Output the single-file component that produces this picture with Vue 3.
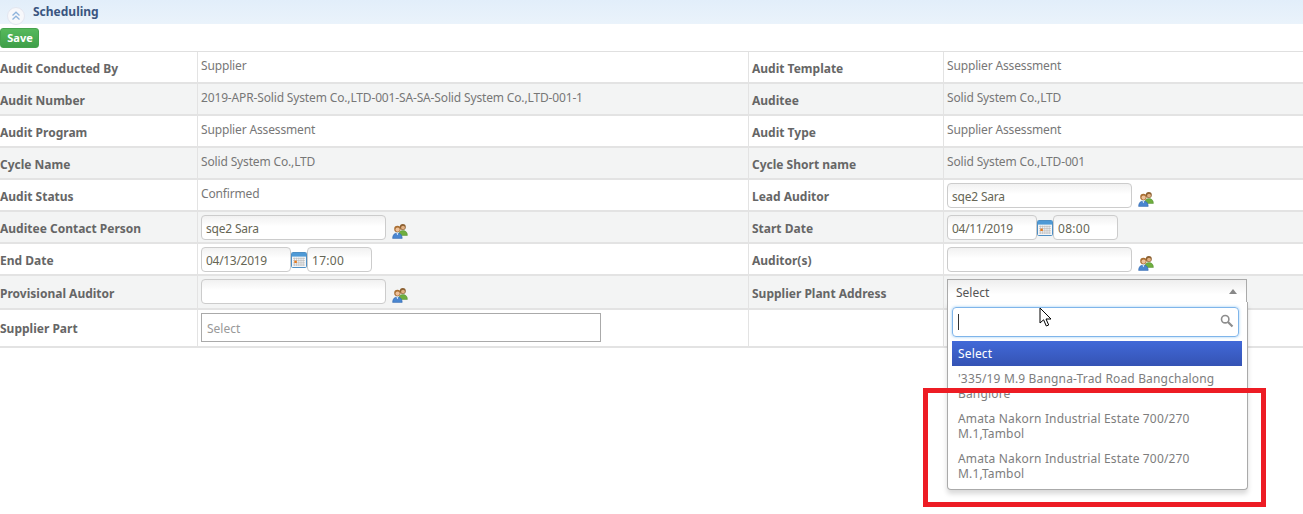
<script setup>
const rows = [
  { l1: 'Audit Conducted By', v1: 'Supplier', l2: 'Audit Template', v2: 'Supplier Assessment' },
  { l1: 'Audit Number', v1: '2019-APR-Solid System Co.,LTD-001-SA-SA-Solid System Co.,LTD-001-1', l2: 'Auditee', v2: 'Solid System Co.,LTD' },
  { l1: 'Audit Program', v1: 'Supplier Assessment', l2: 'Audit Type', v2: 'Supplier Assessment' },
  { l1: 'Cycle Name', v1: 'Solid System Co.,LTD', l2: 'Cycle Short name', v2: 'Solid System Co.,LTD-001' },
]
</script>

<template>
  <div class="page">
    <div class="head">
      <span class="collapse">
        <svg width="12" height="12" viewBox="0 0 12 12" fill="none" stroke="#8fb4dc" stroke-width="1.3"><path d="M2.5 5.5 6 2.2l3.5 3.3M2.5 9.5 6 6.2l3.5 3.3" /></svg>
      </span>
      <span class="title">Scheduling</span>
    </div>
    <div class="bar"><button class="save">Save</button></div>

    <div class="table">
      <div v-for="r in rows" :key="r.l1" class="row">
        <div class="cell label">{{ r.l1 }}</div>
        <div class="cell val">{{ r.v1 }}</div>
        <div class="cell label second">{{ r.l2 }}</div>
        <div class="cell val">{{ r.v2 }}</div>
      </div>

      <div class="row">
        <div class="cell label">Audit Status</div>
        <div class="cell val">Confirmed</div>
        <div class="cell label second">Lead Auditor</div>
        <div class="cell ctl">
          <span class="input wide">sqe2 Sara</span>
          <svg class="people" viewBox="0 0 16 16"><use href="#people" /></svg>
        </div>
      </div>

      <div class="row">
        <div class="cell label">Auditee Contact Person</div>
        <div class="cell ctl">
          <span class="input wide">sqe2 Sara</span>
          <svg class="people" viewBox="0 0 16 16"><use href="#people" /></svg>
        </div>
        <div class="cell label second">Start Date</div>
        <div class="cell ctl">
          <span class="input date">04/11/2019</span>
          <svg class="cal" viewBox="0 0 16 16"><use href="#cal" /></svg>
          <span class="input time">08:00</span>
        </div>
      </div>

      <div class="row">
        <div class="cell label">End Date</div>
        <div class="cell ctl">
          <span class="input date">04/13/2019</span>
          <svg class="cal" viewBox="0 0 16 16"><use href="#cal" /></svg>
          <span class="input time">17:00</span>
        </div>
        <div class="cell label second">Auditor(s)</div>
        <div class="cell ctl">
          <span class="input wide"></span>
          <svg class="people" viewBox="0 0 16 16"><use href="#people" /></svg>
        </div>
      </div>

      <div class="row tall">
        <div class="cell label">Provisional Auditor</div>
        <div class="cell ctl">
          <span class="input wide"></span>
          <svg class="people" viewBox="0 0 16 16"><use href="#people" /></svg>
        </div>
        <div class="cell label second">Supplier Plant Address</div>
        <div class="cell ctl plant">
          <div class="select-wrap">
            <div class="select">
              <span>Select</span>
              <i class="caret"></i>
            </div>
            <div class="drop">
              <div class="search">
                <i class="text-cursor"></i>
                <svg class="glass" width="14" height="14" viewBox="0 0 14 14" fill="none" stroke="#8d8d8d"><circle cx="5.2" cy="5.2" r="3.7" stroke-width="1.6" /><path d="m8 8 4.5 4.5" stroke-width="2.2" /></svg>
              </div>
              <div class="opt active">Select</div>
              <div class="list">
                <div class="opt">'335/19 M.9 Bangna-Trad Road Bangchalong Banglore</div>
                <div class="opt">Amata Nakorn Industrial Estate 700/270 M.1,Tambol</div>
                <div class="opt">Amata Nakorn Industrial Estate 700/270 M.1,Tambol</div>
              </div>
            </div>
          </div>
        </div>
      </div>

      <div class="row last">
        <div class="cell label">Supplier Part</div>
        <div class="cell ctl">
          <span class="multi">Select</span>
        </div>
        <div class="cell label second"></div>
        <div class="cell val"></div>
      </div>
    </div>

    <div class="redbox"></div>
    <svg class="pointer" width="14" height="21" viewBox="0 0 14 21"><path d="M1 1v15l3.6-3.2 2.7 6.2 2.4-1-2.7-6h5z" fill="#fff" stroke="#000" stroke-width="1" /></svg>

    <svg class="defs" width="0" height="0">
      <defs>
        <g id="people">
          <circle cx="10.8" cy="4" r="3" fill="#8a5f30" />
          <circle cx="11" cy="4.6" r="1.9" fill="#e2b184" />
          <path d="M6.6 12.4c0-3.2 1.9-4.8 4.4-4.8s4.4 1.6 4.4 4.8z" fill="#6fae3f" stroke="#4d8a2a" stroke-width=".5" />
          <circle cx="5.4" cy="6" r="3.2" fill="#a96f33" />
          <circle cx="5.6" cy="6.6" r="2.1" fill="#eec19a" />
          <path d="M.6 15.4c0-3.7 2-5.4 4.8-5.4s4.8 1.7 4.8 5.4z" fill="#4a86d0" stroke="#2f62a8" stroke-width=".5" />
          <path d="M4.4 10.2h2l-1 2z" fill="#fff" />
        </g>
        <g id="cal">
          <rect x=".5" y=".5" width="15" height="15" rx="1" fill="#f4f6f8" stroke="#4f8fc4" />
          <rect x="1" y="1" width="14" height="3.6" fill="#4f9ad6" />
          <path d="M2 6.4h12M2 8.6h12M2 10.8h12M2 13h12M3.4 5.6v8.4M5.6 5.6v8.4M7.8 5.6v8.4M10 5.6v8.4M12.2 5.6v8.4" stroke="#b4b4b4" stroke-width=".6" />
          <rect x="3.4" y="8.6" width="2.4" height="2.4" fill="#e8791c" />
        </g>
      </defs>
    </svg>
  </div>
</template>

<style scoped>
.page {
  position: relative;
  width: 1303px;
  height: 514px;
  overflow: hidden;
  background: #fff;
  font-family: "Noto Sans", "DejaVu Sans", sans-serif;
  font-size: 12px;
  color: #777;
}
.head {
  height: 24px;
  display: flex;
  align-items: flex-start;
  background: linear-gradient(#e2eefa, #eaf3fb);
}
.collapse {
  width: 16px;
  height: 16px;
  margin: 7px 0 0 7px;
  border-radius: 50%;
  background: #f7f8fb;
  border: 1px solid #e3e6f0;
  display: flex;
  align-items: center;
  justify-content: center;
  flex: none;
}
.title {
  margin: 3px 0 0 8px;
  font-weight: 700;
  color: #3a5580;
  font-size: 12px;
}
.bar {
  height: 27px;
  padding-top: 4px;
  box-sizing: border-box;
}
.save {
  display: block;
  width: 39px;
  height: 20px;
  padding: 0 0 2px 1px;
  border: 1px solid #46a34d;
  border-radius: 3px;
  background: linear-gradient(#56b95c, #3f9f49);
  color: #fff;
  font: 700 11px "Noto Sans", sans-serif;
}
.table {
  border-top: 1px solid #e0e0e0;
}
.row {
  display: grid;
  grid-template-columns: 197px 551px 195px 1fr;
  height: 32px;
  box-sizing: border-box;
  border-bottom: 2px solid #e3e3e3;
}
.row:nth-child(even) {
  background: #f3f4f4;
}
.row.tall {
  height: 34px;
}
.row.last {
  height: 38px;
}
.cell {
  box-sizing: border-box;
  min-width: 0;
  white-space: nowrap;
}
.label {
  font-weight: 700;
  color: #666;
  padding-top: 8px;
}
.tall .label {
  padding-top: 9px;
}
.last .label {
  padding-top: 10px;
}
.second {
  padding-left: 3px;
  border-left: 1px solid #e3e3e3;
}
.val {
  padding: 5px 0 0 3px;
  border-left: 1px solid #e3e3e3;
  letter-spacing: -0.15px;
}
.ctl {
  display: flex;
  align-items: flex-start;
  padding: 3px 0 0 3px;
  border-left: 1px solid #e3e3e3;
}
.input {
  display: block;
  box-sizing: border-box;
  height: 25px;
  line-height: 25px;
  padding-left: 4px;
  border: 1px solid #ccc;
  border-radius: 4px;
  background: linear-gradient(#f1f1f1, #fff 45%);
  color: #665;
}
.wide { width: 185px; letter-spacing: -0.2px; }
.date { width: 90px; letter-spacing: -0.3px; }
.time { width: 65px; letter-spacing: 0.3px; }
.people {
  width: 16px;
  height: 16px;
  margin: 8px 0 0 6px;
}
.cal {
  width: 16px;
  height: 16px;
  margin: 5px 0 0 0;
}
.multi {
  display: block;
  box-sizing: border-box;
  width: 400px;
  height: 29px;
  line-height: 29px;
  padding-left: 5px;
  border: 1px solid #aaa;
  color: #999;
}
.select-wrap {
  position: relative;
  width: 300px;
}
.select {
  box-sizing: border-box;
  height: 30px;
  padding: 4px 9px 0 8px;
  display: flex;
  justify-content: space-between;
  border: 1px solid #aaa;
  border-bottom: 0;
  background: linear-gradient(#eee, #fff 50%);
  color: #555;
}
.caret {
  width: 0;
  height: 0;
  margin: 5px 0 0 0;
  border: 4px solid transparent;
  border-top: 0;
  border-bottom: 5px solid #888;
}
.drop {
  position: absolute;
  top: 23px;
  left: 0;
  z-index: 3;
  box-sizing: border-box;
  width: 301px;
  height: 188px;
  padding: 5px 5px 0 4px;
  background: #fff;
  border: 1px solid #aaa;
  border-top: 0;
  border-radius: 0 0 4px 4px;
  box-shadow: 0 4px 5px rgba(0, 0, 0, .15);
}
.search {
  position: relative;
  box-sizing: border-box;
  height: 30px;
  margin-right: 3px;
  border: 1px solid #7fb5ea;
  border-radius: 4px;
  box-shadow: 0 0 3px rgba(82, 168, 236, .6);
}
.text-cursor {
  position: absolute;
  left: 5px;
  top: 6px;
  width: 1px;
  height: 16px;
  background: #333;
}
.glass {
  position: absolute;
  right: 4px;
  top: 6px;
}
.opt {
  padding: 3px 6px 4px;
  line-height: 15px;
  white-space: normal;
  color: #7d7d7d;
  margin-bottom: 3px;
  letter-spacing: 0.16px;
}
.opt.active {
  margin: 4px 0 0;
  height: 25px;
  box-sizing: border-box;
  padding: 5px 6px 0;
  background: linear-gradient(#4169d8, #3553b4);
  color: #fff;
}
.list {
  padding-top: 2px;
}
.redbox {
  position: absolute;
  left: 923px;
  top: 388px;
  width: 343px;
  height: 119px;
  box-sizing: border-box;
  border: 5px solid #ed1c24;
  z-index: 4;
  pointer-events: none;
}
.pointer {
  position: absolute;
  left: 1039px;
  top: 307px;
  z-index: 5;
}
.defs {
  position: absolute;
}
</style>
